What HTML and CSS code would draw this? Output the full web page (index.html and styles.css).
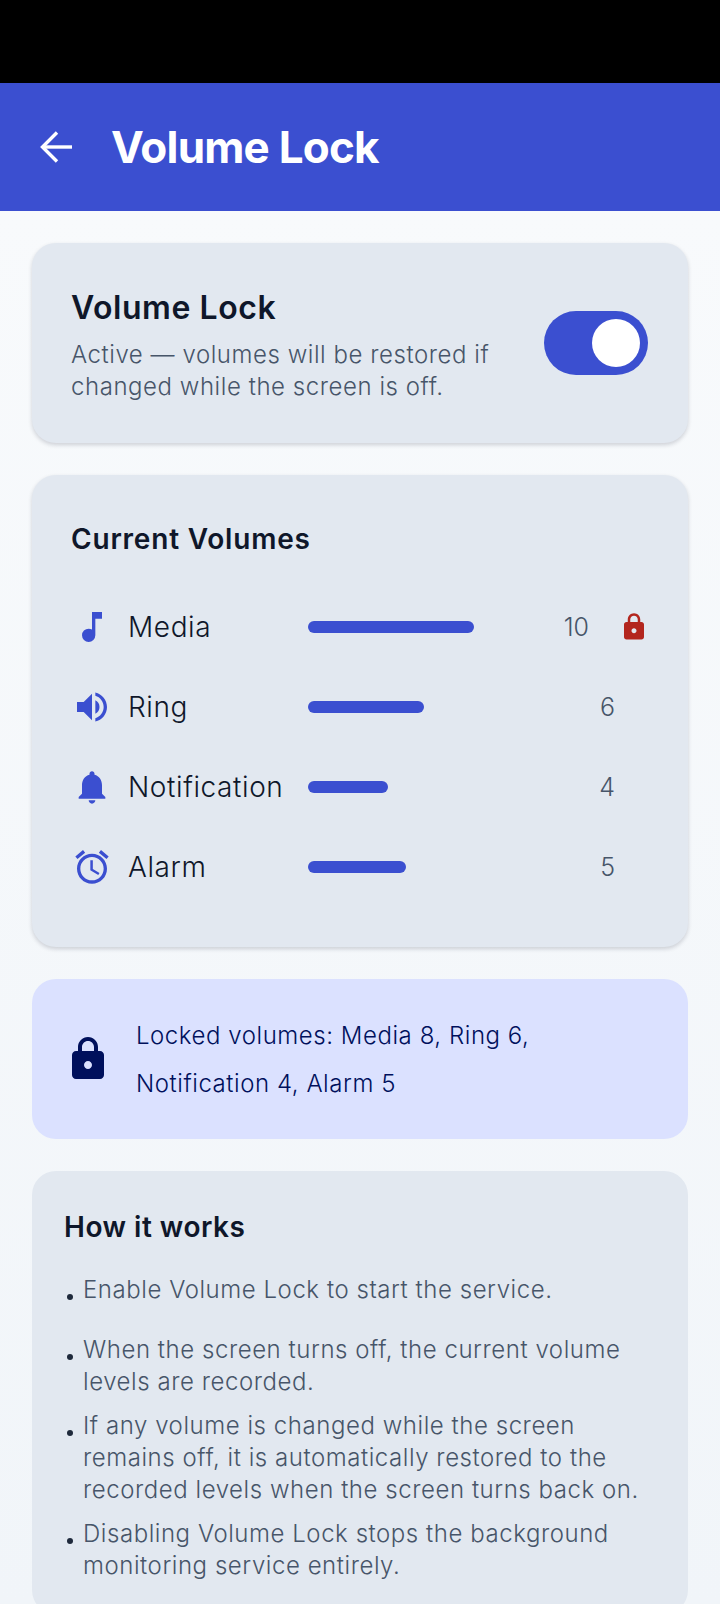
FILE: index.html
```html
<!DOCTYPE html>
<html lang="en">
<head>
  <meta charset="UTF-8">
  <meta name="viewport" content="width=device-width, initial-scale=1.0">
  <title>Volume Lock</title>
  <link rel="stylesheet" href="styles.css">
</head>
<body>
  <div class="status-bar"></div>
  <header class="app-bar">
    <svg class="back" viewBox="0 0 32 32" fill="none" stroke="#fff" stroke-width="3.4">
      <path d="M32 16H3"/><path d="M17 1.500L2.500 16L17 30.500"/>
    </svg>
    <h1>Volume Lock</h1>
  </header>

  <main class="content">
    <section class="card toggle-card">
      <div class="toggle-text">
        <h2>Volume Lock</h2>
        <p>Active — volumes will be restored if changed while the screen is off.</p>
      </div>
      <div class="switch"><span class="thumb"></span></div>
    </section>

    <section class="card volumes">
      <h3>Current Volumes</h3>
      <div class="row">
        <svg class="icon" viewBox="0 0 24 24"><path d="M12 3v10.550A4 4 0 0 0 10 13a4 4 0 1 0 4 4V7h4V3h-6z"/></svg>
        <span class="label">Media</span>
        <span class="bar" style="width:166px"></span>
        <span class="val val-locked">10</span>
        <svg class="lock-small" viewBox="0 0 24 24"><path d="M18 8h-1V6c0-2.760-2.240-5-5-5S7 3.240 7 6v2H6c-1.100 0-2 .9-2 2v10c0 1.100.9 2 2 2h12c1.100 0 2-.9 2-2V10c0-1.100-.9-2-2-2zm-6 9c-1.100 0-2-.9-2-2s.9-2 2-2 2 .9 2 2-.9 2-2 2zM9 8V6c0-1.660 1.340-3 3-3s3 1.340 3 3v2H9z"/></svg>
      </div>
      <div class="row">
        <svg class="icon" viewBox="0 0 24 24"><path d="M3 9v6h4l5 5V4L7 9H3zm13.500 3A4.500 4.500 0 0 0 14 7.970v8.050A4.470 4.470 0 0 0 16.500 12zM14 3.230v2.060c2.890.86 5 3.540 5 6.710s-2.110 5.850-5 6.710v2.060c4.010-.91 7-4.490 7-8.770s-2.990-7.860-7-8.770z"/></svg>
        <span class="label">Ring</span>
        <span class="bar" style="width:116px"></span>
        <span class="val">6</span>
      </div>
      <div class="row">
        <svg class="icon" viewBox="0 0 24 24"><path d="M12 22c1.100 0 2-.9 2-2h-4c0 1.100.9 2 2 2zm6-6v-5c0-3.070-1.630-5.640-4.500-6.320V4c0-.83-.67-1.500-1.500-1.500s-1.500.67-1.500 1.500v.68C7.640 5.360 6 7.920 6 11v5l-2 2v1h16v-1l-2-2z"/></svg>
        <span class="label">Notification</span>
        <span class="bar" style="width:80px"></span>
        <span class="val">4</span>
      </div>
      <div class="row">
        <svg class="icon" viewBox="0 0 24 24"><path d="M22 5.720l-4.600-3.860-1.290 1.530 4.600 3.860L22 5.720zM7.880 3.390L6.600 1.860 2 5.710l1.290 1.530 4.590-3.850zM12.500 8H11v6l4.750 2.850.75-1.230-4-2.370V8zM12 4c-4.970 0-9 4.030-9 9s4.020 9 9 9c4.970 0 9-4.030 9-9s-4.030-9-9-9zm0 16c-3.870 0-7-3.130-7-7s3.130-7 7-7 7 3.130 7 7-3.130 7-7 7z"/></svg>
        <span class="label">Alarm</span>
        <span class="bar" style="width:98px"></span>
        <span class="val">5</span>
      </div>
    </section>

    <section class="info">
      <svg class="info-icon" viewBox="0 0 24 24"><path d="M18 8h-1V6c0-2.760-2.240-5-5-5S7 3.240 7 6v2H6c-1.100 0-2 .9-2 2v10c0 1.100.9 2 2 2h12c1.100 0 2-.9 2-2V10c0-1.100-.9-2-2-2zm-6 9c-1.100 0-2-.9-2-2s.9-2 2-2 2 .9 2 2-.9 2-2 2zM9 8V6c0-1.660 1.340-3 3-3s3 1.340 3 3v2H9z"/></svg>
      <p>Locked volumes: Media 8, Ring 6, Notification 4, Alarm 5</p>
    </section>

    <section class="how">
      <h3>How it works</h3>
      <ul>
        <li class="first"><span class="dot"></span><span>Enable Volume Lock to start the service.</span></li>
        <li><span class="dot"></span><span>When the screen turns off, the current volume levels are recorded.</span></li>
        <li><span class="dot"></span><span>If any volume is changed while the screen remains off, it is automatically restored to the recorded levels when the screen turns back on.</span></li>
        <li><span class="dot"></span><span>Disabling Volume Lock stops the background monitoring service entirely.</span></li>
      </ul>
    </section>
  </main>
</body>
</html>
```

FILE: styles.css
```css
* { box-sizing: border-box; }
html, body { margin: 0; height: 1604px; overflow: hidden; }
body { font-family: Inter, "Noto Sans", sans-serif; background: #f8fafc; color: #0f172a; }
h1, h2, h3, p, ul { margin: 0; padding: 0; }

.status-bar { height: 83px; background: #000; }
.app-bar { height: 128px; background: #3b4fd0; display: flex; align-items: center; padding-left: 40px; gap: 39px; }
.back { width: 32px; height: 32px; flex: none; }
.app-bar h1 { color: #fff; font-size: 44px; font-weight: 700; letter-spacing: -0.8px; }

.content { height: 1393px; padding: 32px; display: flex; flex-direction: column; gap: 32px; background: linear-gradient(#f8fafc, #f1f5f9); overflow: hidden; }
.card { background: #e2e8f0; border-radius: 24px; box-shadow: 0 2px 4px rgba(15,23,42,0.18); flex: none; }

.toggle-card { height: 200px; padding: 0 40px; display: flex; align-items: center; justify-content: space-between; }
.toggle-text { width: 440px; padding-top: 5px; margin-left: -1px; }
.toggle-text h2 { font-size: 32px; font-weight: 600; line-height: 40px; margin-bottom: 11px; letter-spacing: 0.55px; }
.toggle-text p { font-size: 24px; font-weight: 350; line-height: 32px; color: #475569; letter-spacing: 0.55px; }
.switch { width: 104px; height: 64px; border-radius: 32px; background: #3b4fd0; display: flex; align-items: center; justify-content: flex-end; padding-right: 8px; }
.thumb { width: 48px; height: 48px; border-radius: 50%; background: #fff; }

.volumes { height: 472px; padding: 40px; }
.volumes h3 { font-size: 28px; font-weight: 600; line-height: 48px; margin: 0 0 24px -1px; letter-spacing: 0.8px; }
.row { height: 80px; display: flex; align-items: center; }
.icon { width: 40px; height: 40px; flex: none; fill: #3b4fd0; }
.label { width: 196px; padding-left: 16px; font-size: 28px; font-weight: 350; flex: none; letter-spacing: 0.6px; }
.bar { height: 12px; border-radius: 6px; background: #3b4fd0; }
.val { margin-left: auto; margin-right: 33px; font-size: 25px; font-weight: 350; color: #475569; }
.val-locked { margin-right: 35px; }
.lock-small { width: 30px; height: 30px; flex: none; fill: #b3261e; margin-right: -1px; margin-left: -5px; }

.info { height: 160px; flex: none; background: #dbe1ff; border-radius: 24px; padding: 0 32px; display: flex; align-items: center; gap: 24px; color: #00105c; }
.info-icon { width: 48px; height: 48px; flex: none; fill: #00105c; }
.info p { font-size: 24px; font-weight: 350; line-height: 48px; width: 420px; letter-spacing: 0.55px; padding-top: 1px; }

.how { flex: none; background: #e2e8f0; border-radius: 24px; padding: 34px 32px 32px; }
.how h3 { font-size: 28px; font-weight: 600; line-height: 44px; margin-bottom: 25px; letter-spacing: 0.5px; }
.how ul { list-style: none; display: flex; flex-direction: column; gap: 12px; }
.how li { display: flex; gap: 10px; font-size: 24px; font-weight: 350; line-height: 32px; color: #475569; letter-spacing: 0.55px; }
.how li.first { min-height: 48px; }
.dot { width: 6px; height: 6px; border-radius: 50%; background: #1e293b; flex: none; margin: 20px 0 0 3px; }
```
